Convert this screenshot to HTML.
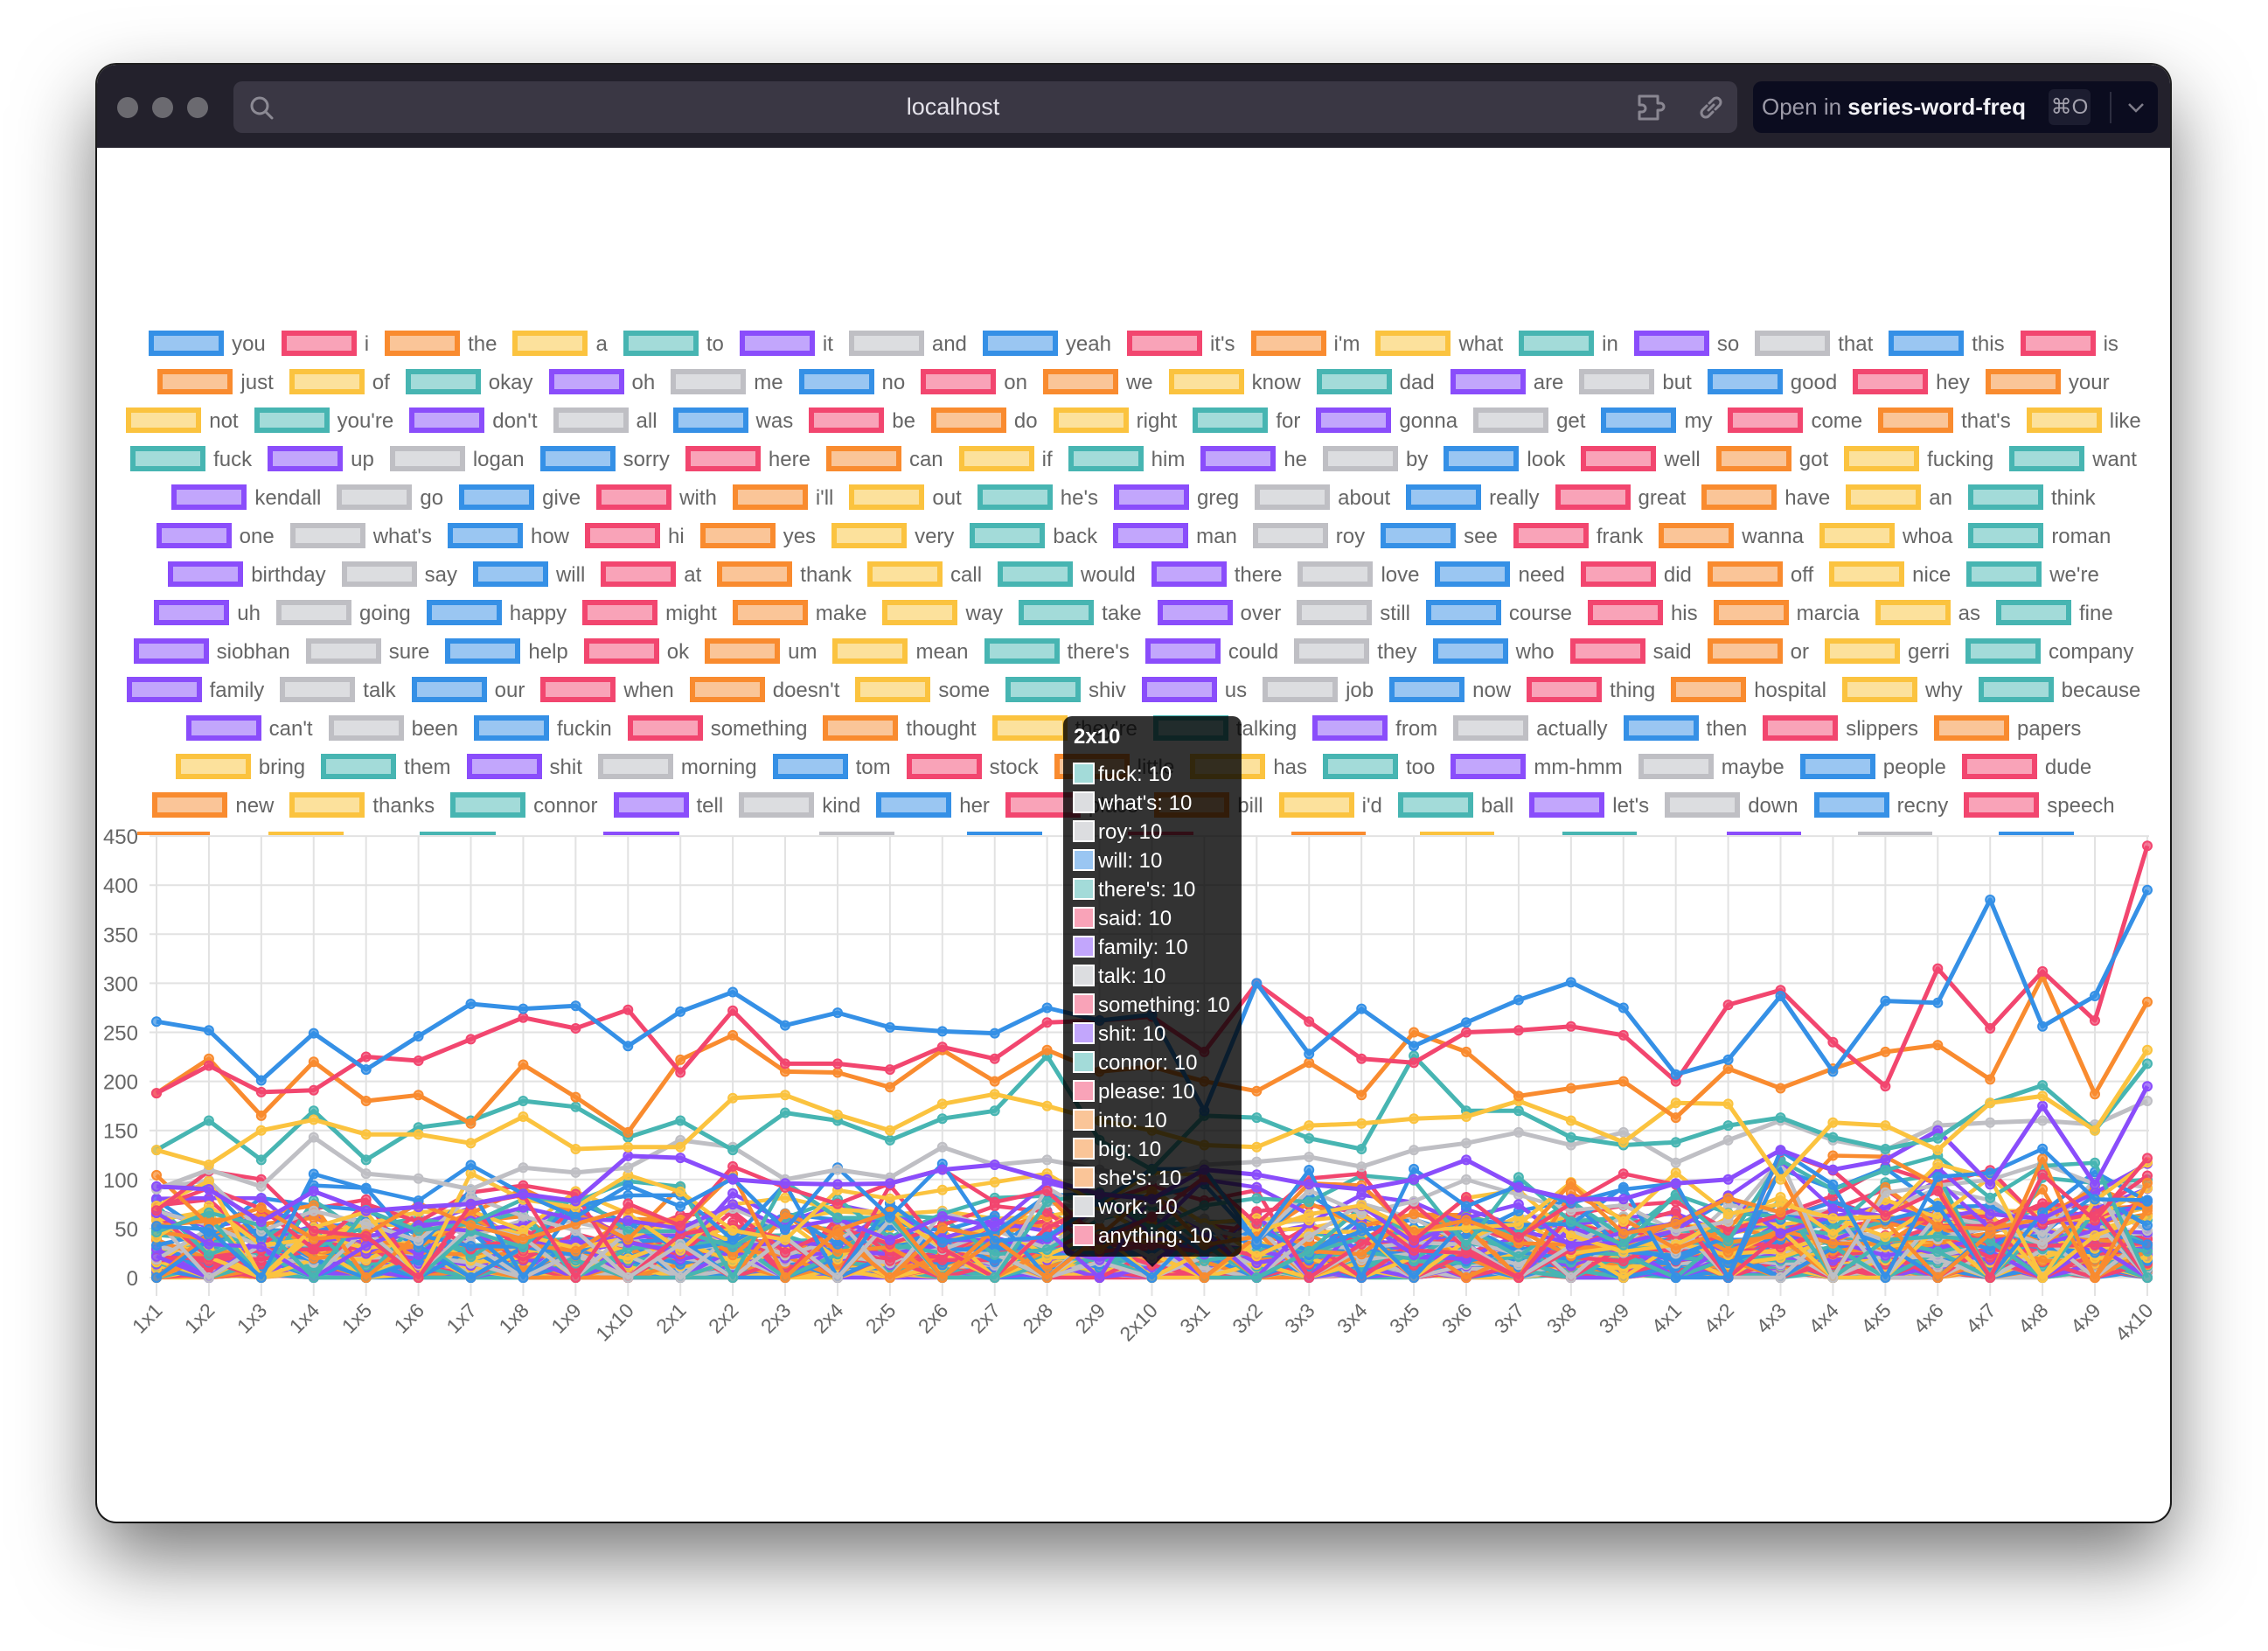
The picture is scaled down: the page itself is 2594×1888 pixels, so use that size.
<!DOCTYPE html>
<html><head><meta charset="utf-8">
<style>
html,body{margin:0;padding:0;background:#fff;width:2594px;height:1888px;overflow:hidden;font-family:"Liberation Sans",Arial,sans-serif}
.win{position:absolute;left:111px;top:74px;width:2371px;height:1666px;border-radius:22px;background:#fff;box-shadow:0 40px 90px rgba(0,0,0,0.55),0 0 0 2px #222;overflow:hidden}
.bar{position:absolute;left:0;top:0;width:100%;height:95px;background:#23212c}
.dot{position:absolute;top:37px;width:24px;height:24px;border-radius:50%;background:#6b6a70}
.url{position:absolute;left:156px;top:19px;width:1720px;height:59px;border-radius:10px;background:#3a3744}
.url .t{position:absolute;left:0;right:74px;top:14px;text-align:center;color:#e4e2ea;font-size:27px}
.open{position:absolute;left:1894px;top:19px;width:463px;height:59px;border-radius:10px;background:#0b0c1f}
.leg{position:absolute;left:0;width:2371px;text-align:center;white-space:nowrap;font-size:24px;color:#666;height:44px;line-height:44px}
.it{display:inline-block;vertical-align:top;margin:0 9px}
.bx{display:inline-block;vertical-align:middle;width:74px;height:17px;border:6px solid;margin-right:9px;position:relative;top:-2px}
.c0{border-color:#3590e6;background:#9ac6f2}.c1{border-color:#f2466f;background:#f9a3b8}.c2{border-color:#f98b2f;background:#fac598}.c3{border-color:#fbc33f;background:#fce19c}.c4{border-color:#47b5b2;background:#a3dbd9}.c5{border-color:#8a4dfb;background:#c2a6fc}.c6{border-color:#bfbfc4;background:#dcdde0}
.tip{position:absolute;left:1105px;top:745px;width:204px;height:618px;border-radius:10px;background:rgba(0,0,0,0.8);color:#fff;font-size:24px}
.tip .h{position:absolute;left:12px;top:10px;font-weight:bold}
.tip .r{position:absolute;left:11px;height:33px;line-height:33px;white-space:nowrap}
.tip .r i{display:inline-block;width:21px;height:21px;border:2px solid #fff;vertical-align:middle;margin-right:4px;position:relative;top:-2px}
</style></head><body>
<div class="win">
 <div class="bar">
  <div class="dot" style="left:23px"></div><div class="dot" style="left:63px"></div><div class="dot" style="left:103px"></div>
  <div class="url"><div class="t">localhost</div>
   <svg style="position:absolute;left:16px;top:14px" width="34" height="34" viewBox="0 0 34 34"><circle cx="14" cy="14" r="9" fill="none" stroke="#8c8a94" stroke-width="3"/><line x1="21" y1="21" x2="28" y2="28" stroke="#8c8a94" stroke-width="3" stroke-linecap="round"/></svg>
   <svg style="position:absolute;left:1604px;top:12px" width="42" height="36" viewBox="0 0 42 36"><path d="M4 5h21v8h3a4 4 0 0 1 0 8h-3v10H4v-8h3a4 4 0 0 0 0-8H4z" fill="none" stroke="#8a8792" stroke-width="3" stroke-linejoin="round"/></svg>
   <svg style="position:absolute;left:1672px;top:12px" width="36" height="36" viewBox="0 0 36 36"><path d="M15 21l6-6M13 16l-5 5a5 5 0 0 0 7 7l5-5M23 20l5-5a5 5 0 0 0-7-7l-5 5" fill="none" stroke="#8a8792" stroke-width="3" stroke-linecap="round"/></svg>
  </div>
  <div class="open">
   <div style="position:absolute;left:10px;top:14px;font-size:26px;color:#9c9aa8;white-space:nowrap">Open in <b style="color:#f2f2f6;font-weight:bold">series-word-freq</b></div>
   <div style="position:absolute;left:338px;top:9px;width:48px;height:41px;border-radius:6px;background:#1c1d30;color:#a4a2ae;font-size:24px;line-height:41px;text-align:center">⌘O</div>
   <div style="position:absolute;left:408px;top:12px;width:2px;height:36px;background:#2d2e40"></div>
   <svg style="position:absolute;left:426px;top:20px" width="24" height="20" viewBox="0 0 24 20"><path d="M4 6l8 8 8-8" fill="none" stroke="#7f7d8a" stroke-width="2.5"/></svg>
  </div>
 </div>
 <div id="legend"></div>
 <svg id="ch" style="position:absolute;left:-111px;top:-74px" width="2594" height="1888"></svg>
 <div class="tip">
  <div class="h">2x10</div>
  <div class="r" style="top:50px"><i style="background:#a3dbd9"></i>fuck: 10</div>
  <div class="r" style="top:83px"><i style="background:#dcdde0"></i>what's: 10</div>
  <div class="r" style="top:116px"><i style="background:#dcdde0"></i>roy: 10</div>
  <div class="r" style="top:149px"><i style="background:#9ac6f2"></i>will: 10</div>
  <div class="r" style="top:182px"><i style="background:#a3dbd9"></i>there's: 10</div>
  <div class="r" style="top:215px"><i style="background:#f9a3b8"></i>said: 10</div>
  <div class="r" style="top:248px"><i style="background:#c2a6fc"></i>family: 10</div>
  <div class="r" style="top:281px"><i style="background:#dcdde0"></i>talk: 10</div>
  <div class="r" style="top:314px"><i style="background:#f9a3b8"></i>something: 10</div>
  <div class="r" style="top:347px"><i style="background:#c2a6fc"></i>shit: 10</div>
  <div class="r" style="top:380px"><i style="background:#a3dbd9"></i>connor: 10</div>
  <div class="r" style="top:413px"><i style="background:#f9a3b8"></i>please: 10</div>
  <div class="r" style="top:446px"><i style="background:#fac598"></i>into: 10</div>
  <div class="r" style="top:479px"><i style="background:#fac598"></i>big: 10</div>
  <div class="r" style="top:512px"><i style="background:#fac598"></i>she's: 10</div>
  <div class="r" style="top:545px"><i style="background:#dcdde0"></i>work: 10</div>
  <div class="r" style="top:578px"><i style="background:#f9a3b8"></i>anything: 10</div>
  <div style="position:absolute;left:90px;bottom:-12px;width:0;height:0;border-left:12px solid transparent;border-right:12px solid transparent;border-top:12px solid rgba(0,0,0,0.8)"></div>
 </div>
</div>
<div id="rows" style="display:none">
you i the a to it and yeah it's i'm what in so that this is
just of okay oh me no on we know dad are but good hey your
not you're don't all was be do right for gonna get my come that's like
fuck up logan sorry here can if him he by look well got fucking want
kendall go give with i'll out he's greg about really great have an think
one what's how hi yes very back man roy see frank wanna whoa roman
birthday say will at thank call would there love need did off nice we're
uh going happy might make way take over still course his marcia as fine
siobhan sure help ok um mean there's could they who said or gerri company
family talk our when doesn't some shiv us job now thing hospital why because
can't been fuckin something thought they're talking from actually then slippers papers
bring them shit morning tom stock little has too mm-hmm maybe people dude
new thanks connor tell kind her place bill i'd ball let's down recny speech
</div>
<script>
(function(){
var rows=document.getElementById('rows').textContent.trim().split('\n');
var L=document.getElementById('legend'),k=0,h='';
rows.forEach(function(r,i){
 var ws=r.trim().split(/\s+/);
 h+='<div class="leg" style="top:'+(298+i*44)+'px">';
 ws.forEach(function(w){h+='<span class="it"><span class="bx c'+(k%7)+'"></span>'+w.replace(/'/g,"&#39;")+'</span>';k++;});
 h+='</div>';
});
L.innerHTML=h;
var C=['#3590e6','#f2466f','#f98b2f','#fbc33f','#47b5b2','#8a4dfb','#bfbfc4'];
var s='';var N=39;
var X=function(i){return 179+i*59.92},Y=function(v){return 1461-v*1.122};
for(var i=0;i<N;i++){s+='<line x1="'+X(i)+'" y1="956" x2="'+X(i)+'" y2="1482" stroke="#e2e2e2" stroke-width="2"/>';}
for(var v=0;v<=450;v+=50){s+='<line x1="171" y1="'+Y(v)+'" x2="2458" y2="'+Y(v)+'" stroke="#e2e2e2" stroke-width="2"/>';
 s+='<text x="158" y="'+(Y(v)+9)+'" text-anchor="end" font-size="24" fill="#666" font-family="Liberation Sans,Arial,sans-serif">'+v+'</text>';}
var segs=[[157,240,2],[307,393,3],[480,567,4],[690,777,5],[937,1023,6],[1106,1192,0],[1290,1365,1],[1477,1562,2],[1624,1709,3],[1787,1872,4],[1975,2060,5],[2125,2210,6],[2286,2372,0]];
segs.forEach(function(g){s+='<rect x="'+g[0]+'" y="951" width="'+(g[1]-g[0])+'" height="4" fill="'+C[g[2]]+'"/>';});
var seed=7;function rnd(){seed=(seed*16807)%2147483647;return seed/2147483647;}
function line(vals,c,w){var p='';vals.forEach(function(v,i){p+=(i?'L':'M')+X(i).toFixed(1)+' '+Y(v).toFixed(1);});
 var o='<path d="'+p+'" fill="none" stroke="'+c+'" stroke-width="'+w+'" stroke-linejoin="round"/>';
 vals.forEach(function(v,i){o+='<circle cx="'+X(i).toFixed(1)+'" cy="'+Y(v).toFixed(1)+'" r="5" fill="'+c+'" fill-opacity="0.7" stroke="'+c+'" stroke-width="2"/>';});return o;}
var others='';
for(var r=180;r>=7;r--){var base=70*Math.exp(-(r-7)/35)+6;var vals=[];
 for(var i=0;i<N;i++){var v=base*(0.45+rnd()*1.1)+(i>30?base*0.3:0);if(rnd()<0.1)v=0;vals.push(Math.max(0,v));}
 others+=line(vals,C[r%7],4.5);}
s+=others;
var M=[
[261,252,201,249,212,246,279,274,277,236,271,291,257,270,255,251,249,275,262,268,170,300,228,274,236,260,283,301,275,207,222,287,210,282,280,385,256,287,395],
[188,216,189,191,225,221,243,265,254,273,209,272,218,218,212,235,223,260,262,266,230,300,261,223,219,250,252,256,247,200,278,293,240,195,315,254,312,262,440],
[188,223,165,220,180,186,157,217,184,148,222,247,210,209,194,232,200,232,210,215,200,190,219,186,250,230,185,193,200,163,213,193,213,230,237,202,307,187,281],
[130,115,150,161,146,146,137,164,131,133,133,183,186,166,150,177,187,175,160,150,135,133,155,157,162,164,180,160,138,178,177,100,158,155,130,178,185,150,232],
[130,160,120,170,120,153,160,180,174,143,160,130,168,160,140,162,170,226,140,110,165,163,142,131,226,170,170,143,135,138,155,163,143,131,142,178,196,150,218],
[93,90,57,88,68,72,75,85,78,124,122,100,96,95,96,110,115,100,85,80,110,105,95,90,100,120,92,80,80,96,100,130,110,120,150,95,175,95,195],
[90,110,93,143,106,101,90,112,107,112,140,133,100,110,102,133,115,120,110,100,115,118,123,113,130,137,148,135,148,117,140,160,140,130,155,158,160,156,180]];
for(var j=6;j>=0;j--){s+=line(M[j].slice(0,N),C[j],5);}
var lab=[];for(var a=1;a<=4;a++){var n=(a==3)?9:10;for(var b=1;b<=n;b++)lab.push(a+'x'+b);}
lab.forEach(function(t,i){var x=X(i)+8,y=1500;s+='<text x="'+x+'" y="'+y+'" text-anchor="end" font-size="23" fill="#666" font-family="Liberation Sans,Arial,sans-serif" transform="rotate(-45 '+x+' '+y+')">'+t+'</text>';});
document.getElementById('ch').innerHTML=s;
})();
</script>
</body></html>
